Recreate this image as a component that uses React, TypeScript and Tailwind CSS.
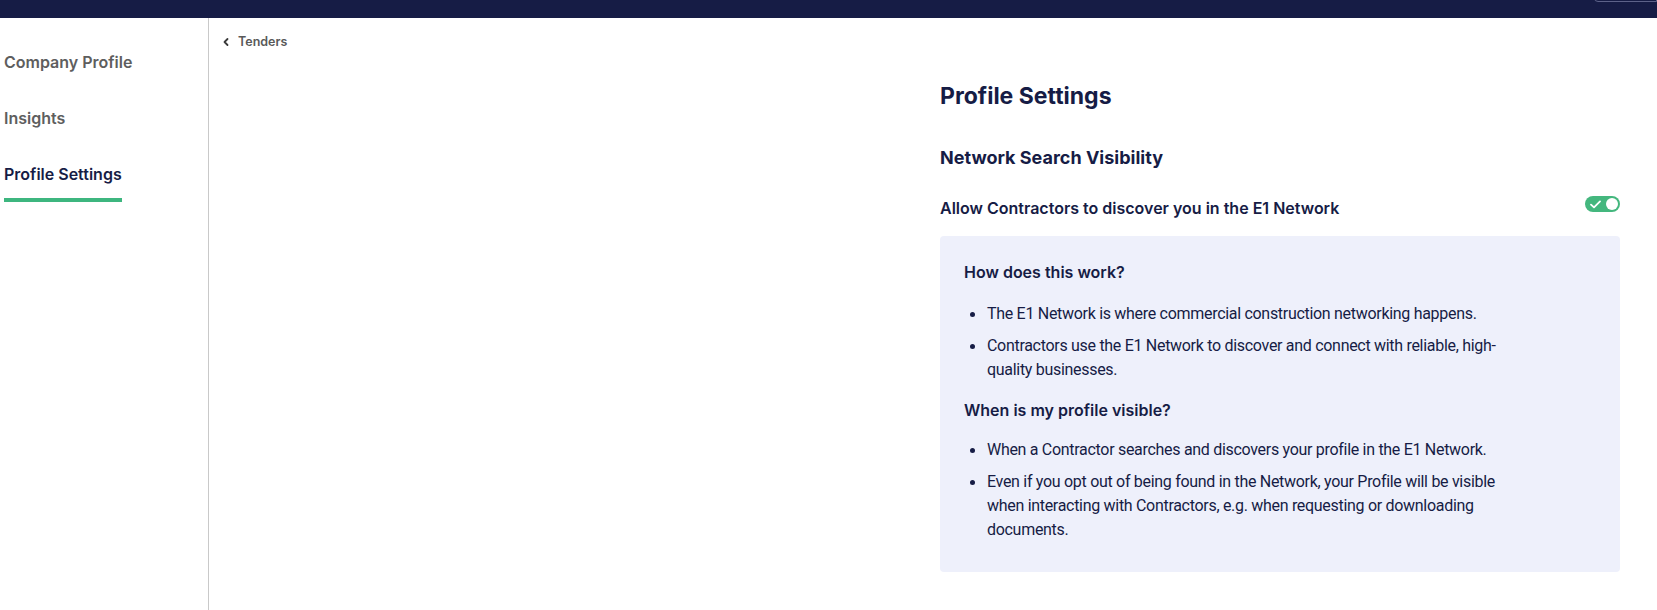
import React from "react";

function Bullet({ children }: { children: React.ReactNode }) {
  return (
    <li className="flex">
      <span className="w-[23px] shrink-0 pt-[10px] pl-[6px]">
        <span className="block w-[5px] h-[5px] rounded-full bg-[#161c45]" />
      </span>
      <span className="font-['Roboto',sans-serif] tracking-[-0.3px]">{children}</span>
    </li>
  );
}

function Toggle() {
  return (
    <div className="w-[35px] h-[16px] rounded-full bg-[#44b77e] flex items-center justify-between pl-[5px] pr-[2px]">
      <svg width="11" height="9" viewBox="0 0 11 9" fill="none">
        <path d="M1 4.6 L4 7.4 L10 1.4" stroke="white" strokeWidth="1.8" strokeLinecap="round" strokeLinejoin="round" />
      </svg>
      <span className="block w-[12px] h-[12px] rounded-full bg-white" />
    </div>
  );
}

export default function App() {
  return (
    <div className="w-[1657px] h-[610px] flex flex-col bg-white font-['Inter',sans-serif] text-[#161c45] overflow-hidden">
      <header className="relative h-[18px] shrink-0 bg-[#161c45]">
        <div className="absolute right-0 top-[-30px] h-[32px] w-[63px] rounded-tl-[4px] rounded-bl-[4px] border border-[#5d6289]" />
      </header>
      <div className="flex flex-1 min-h-0">
        <aside className="w-[209px] shrink-0 border-r border-[#c9c9c9] pl-[4px] pt-[32px]">
          <nav className="flex flex-col gap-8 items-start">
            <a className="text-[16px] leading-[24px] font-semibold text-[#5e5e5e]">Company Profile</a>
            <a className="text-[16px] leading-[24px] font-semibold text-[#5e5e5e]">Insights</a>
            <a className="text-[16px] leading-[24px] font-semibold text-[#161c45] pb-3 border-b-4 border-[#3db67f]">Profile Settings</a>
          </nav>
        </aside>
        <main className="flex-1 flex flex-col">
          <div className="flex items-center gap-[8px] pl-[13px] pt-[15px] h-[32px] text-[12.5px] font-semibold text-[#595959]">
            <svg width="8" height="10" viewBox="0 0 8 10" fill="none">
              <path d="M5.5 2 L2.5 5 L5.5 8" stroke="#3a3a3a" strokeWidth="1.8" strokeLinecap="round" strokeLinejoin="round" />
            </svg>
            <span className="leading-[18px]">Tenders</span>
          </div>
          <div className="flex justify-end pr-[37px]">
            <section className="w-[680px] pt-[30px]">
              <h1 className="text-[23px] leading-[32px] font-bold">Profile Settings</h1>
              <h2 className="mt-[32px] text-[18px] leading-[28px] font-bold">Network Search Visibility</h2>
              <div className="mt-[24px] flex items-start justify-between">
                <p className="text-[16px] leading-[24px] font-semibold">Allow Contractors to discover you in the E1 Network</p>
                <Toggle />
              </div>
              <div className="mt-[16px] rounded-[4px] bg-[#eef0fb] px-[24px] pt-[24px] pb-[30px]">
                <div className="max-w-[552px] text-[16px] leading-[24px]">
                  <h3 className="font-semibold">How does this work?</h3>
                  <ul className="mt-[18px] flex flex-col gap-[8px]">
                    <Bullet>The E1 Network is where commercial construction networking happens.</Bullet>
                    <Bullet>Contractors use the E1 Network to discover and connect with reliable, high-quality businesses.</Bullet>
                  </ul>
                  <h3 className="mt-[16px] font-semibold">When is my profile visible?</h3>
                  <ul className="mt-[16px] flex flex-col gap-[8px]">
                    <Bullet>When a Contractor searches and discovers your profile in the E1 Network.</Bullet>
                    <Bullet>Even if you opt out of being found in the Network, your Profile will be visible when interacting with Contractors, e.g. when requesting or downloading documents.</Bullet>
                  </ul>
                </div>
              </div>
            </section>
          </div>
        </main>
      </div>
    </div>
  );
}
